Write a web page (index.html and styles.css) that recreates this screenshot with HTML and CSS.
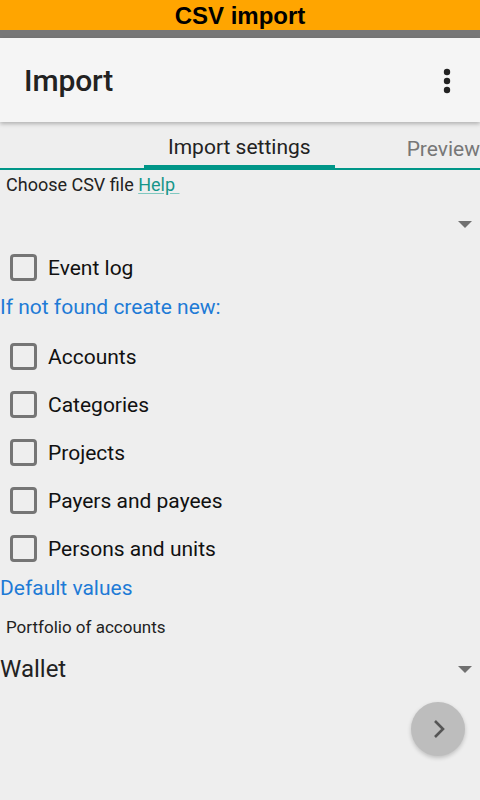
FILE: index.html
```html
<!DOCTYPE html>
<html>
<head>
<meta charset="utf-8">
<link rel="stylesheet" href="styles.css">
</head>
<body>
<div class="screen">
  <div class="banner">CSV import</div>
  <div class="statusbar"></div>
  <div class="appbar">
    <div class="title">Import</div>
    <svg class="more" width="8" height="26" viewBox="0 0 8 26"><circle cx="4" cy="4" r="3.2" fill="#222"/><circle cx="4" cy="13" r="3.2" fill="#222"/><circle cx="4" cy="22" r="3.2" fill="#222"/></svg>
  </div>
  <div class="tabs">
    <div class="tab active">Import settings</div>
    <div class="tab">Preview</div>
  </div>
  <div class="content">
    <div class="choose">Choose CSV file <a class="help">Help&nbsp;</a></div>
    <div class="spinner empty"><span class="caret"></span></div>
    <div class="check first"><span class="box"></span><span>Event log</span></div>
    <div class="heading">If not found create new:</div>
    <div class="check"><span class="box"></span><span>Accounts</span></div>
    <div class="check"><span class="box"></span><span>Categories</span></div>
    <div class="check"><span class="box"></span><span>Projects</span></div>
    <div class="check"><span class="box"></span><span>Payers and payees</span></div>
    <div class="check"><span class="box"></span><span>Persons and units</span></div>
    <div class="heading defaults">Default values</div>
    <div class="label">Portfolio of accounts</div>
    <div class="spinner"><span class="value">Wallet</span><span class="caret"></span></div>
    <div class="fabrow">
      <div class="fab">
        <svg width="14" height="20" viewBox="0 0 14 20"><path d="M3 2 L11 10 L3 18" fill="none" stroke="#555" stroke-width="2.6"/></svg>
      </div>
    </div>
  </div>
</div>
</body>
</html>
```
FILE: styles.css
```css
* { box-sizing: border-box; }
html, body { margin: 0; padding: 0; }
body {
  width: 480px;
  height: 800px;
  background: #eeeeee;
  font-family: Roboto, "Noto Sans", sans-serif;
  color: #222;
  overflow: hidden;
}
.screen { display: flex; flex-direction: column; height: 800px; }
.banner {
  height: 30px;
  background: #ffa500;
  color: #000;
  font-family: "Liberation Sans", Arial, sans-serif;
  font-weight: bold;
  font-size: 24px;
  line-height: 32px;
  text-align: center;
}
.statusbar { height: 8px; background: #777777; }
.appbar {
  height: 84px;
  background: #f5f5f5;
  display: flex;
  align-items: center;
  justify-content: space-between;
  padding: 0 29px 0 24px;
  box-shadow: 0 2px 4px rgba(0,0,0,0.25);
  position: relative;
  z-index: 1;
}
.title { font-size: 30px; font-weight: 500; color: #222; letter-spacing: -0.1px; }
.more { display: block; margin-top: 2px; }
.tabs {
  height: 48px;
  display: flex;
  border-bottom: 2px solid #009688;
  padding-left: 144px;
}
.tab {
  font-size: 21px;
  color: #777;
  display: flex;
  align-items: center;
  justify-content: center;
  padding-top: 7px;
  white-space: nowrap;
}
.tab.active {
  width: 192px;
  color: #222;
  border-bottom: 4px solid #009688;
  margin-bottom: -1px;
  margin-right: 72px;
}
.content { display: flex; flex-direction: column; flex: 1; }
.choose { font-size: 18px; padding-left: 6px; height: 28px; line-height: 29px; color: #222; }
.help { color: #16968a; text-decoration: underline; text-decoration-color: #80c8c0; text-underline-offset: 2px; }
.spinner {
  display: flex;
  align-items: center;
  justify-content: space-between;
  padding-right: 8px;
}
.spinner.empty { height: 52px; justify-content: flex-end; }
.caret {
  width: 0; height: 0;
  border-left: 7px solid transparent;
  border-right: 7px solid transparent;
  border-top: 7px solid #707070;
  margin-top: 1px;
}
.check {
  height: 48px;
  display: flex;
  align-items: center;
  font-size: 21px;
  color: #111;
}
.check span:last-child { padding-top: 2px; }
.check.first { margin-top: -7px; }
.box {
  width: 27px; height: 27px;
  border: 3px solid #757575;
  border-radius: 4px;
  margin-left: 10px;
  margin-right: 11px;
}
.heading {
  color: #1e7bd6;
  font-size: 21px;
  height: 30px;
  line-height: 32px;
  margin-bottom: 11px;
}
.heading.defaults { margin-bottom: 10px; }
.label { font-size: 17px; padding-left: 6px; height: 30px; line-height: 30px; color: #222; }
.spinner .value { font-size: 24px; color: #222; }
.spinner:not(.empty) { height: 50px; margin-top: 2px; }
.fabrow { display: flex; justify-content: flex-end; padding-right: 15px; margin-top: 8px; }
.fab {
  width: 54px; height: 54px;
  border-radius: 50%;
  background: #bdbdbd;
  display: flex;
  align-items: center;
  justify-content: center;
  box-shadow: 0 2px 4px rgba(0,0,0,0.2);
}
.fab svg { display: block; margin-left: 2px; }
```
